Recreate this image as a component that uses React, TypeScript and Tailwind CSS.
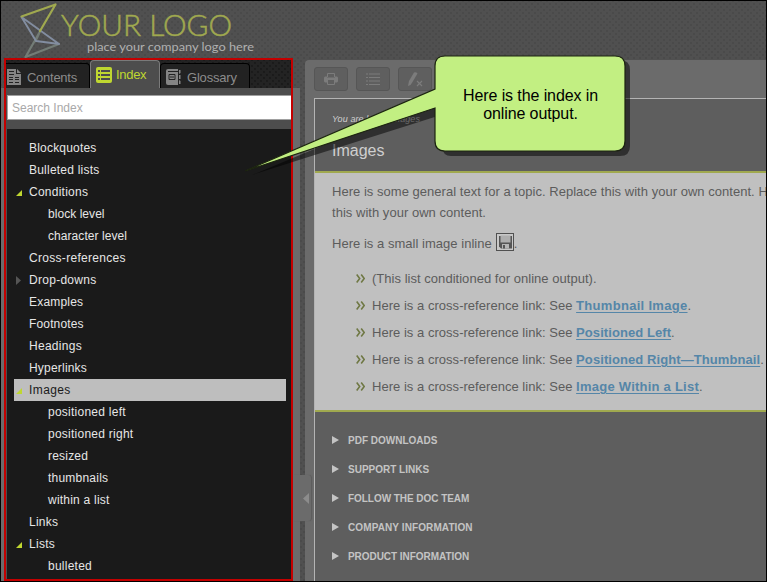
import React from "react";

const sans = "font-['Liberation_Sans',Arial,sans-serif]";

const headerDots =
  "bg-[#505050] bg-[radial-gradient(circle,#464646_0.5px,transparent_1px),radial-gradient(circle,#464646_0.5px,transparent_1px)] bg-[size:6px_6px] bg-[position:0_0,3px_3px]";
const darkDots =
  "bg-[#232323] bg-[radial-gradient(circle,#141414_0.5px,transparent_1px),radial-gradient(circle,#141414_0.5px,transparent_1px)] bg-[size:6px_6px] bg-[position:0_0,3px_3px]";

type Item = { label: string; level?: number; state?: "open" | "closed"; selected?: boolean; ls: string };

const items: Item[] = [
  { label: "Blockquotes", ls: "tracking-[0.2px]" },
  { label: "Bulleted lists", ls: "tracking-[0.22px]" },
  { label: "Conditions", state: "open", ls: "tracking-[0.25px]" },
  { label: "block level", level: 1, ls: "tracking-[0.05px]" },
  { label: "character level", level: 1, ls: "tracking-[0.07px]" },
  { label: "Cross-references", ls: "tracking-[0.3px]" },
  { label: "Drop-downs", state: "closed", ls: "tracking-[0.28px]" },
  { label: "Examples", ls: "tracking-[0.2px]" },
  { label: "Footnotes", ls: "tracking-[0.15px]" },
  { label: "Headings", ls: "tracking-[0.28px]" },
  { label: "Hyperlinks", ls: "tracking-[0.2px]" },
  { label: "Images", state: "open", selected: true, ls: "tracking-[0.4px]" },
  { label: "positioned left", level: 1, ls: "tracking-[0.25px]" },
  { label: "positioned right", level: 1, ls: "tracking-[0.25px]" },
  { label: "resized", level: 1, ls: "tracking-[0.2px]" },
  { label: "thumbnails", level: 1, ls: "tracking-[0.22px]" },
  { label: "within a list", level: 1, ls: "tracking-[0.22px]" },
  { label: "Links", ls: "tracking-[0.25px]" },
  { label: "Lists", state: "open", ls: "tracking-[0.3px]" },
  { label: "bulleted", level: 1, ls: "tracking-[0.25px]" },
];

function Logo() {
  return (
    <svg width="260" height="57" viewBox="0 0 260 57" className="block">
      <g fill="none" strokeLinejoin="round" strokeLinecap="round">
        <path d="M34.500 40 L39 30.500 M39 30.500 L24.500 56 L58 43" stroke="#737c76" strokeWidth="2.200" />
        <path d="M20.500 16 L58 43 L35 40 Z" stroke="#828da0" strokeWidth="1.900" />
        <path d="M20.500 15.500 L54.500 3.500 L39 30" stroke="#a0a94f" strokeWidth="2.200" />
      </g>
      <text
        x="60"
        y="34.500"
        textLength="171"
        lengthAdjust="spacingAndGlyphs"
        fontSize="30"
        fontWeight="300"
        fill="#a0a94f"
        stroke="#a0a94f"
        strokeWidth="0.5"
        fontFamily="Lato, sans-serif"
      >
        YOUR LOGO
      </text>
      <text
        x="86"
        y="50"
        textLength="167"
        lengthAdjust="spacingAndGlyphs"
        fontSize="11"
        fill="#b0b0b0"
        fontFamily="Lato, sans-serif"
      >
        place your company logo here
      </text>
    </svg>
  );
}

function ContentsIcon() {
  return (
    <svg width="14" height="16" viewBox="0 0 14 16" className="block shrink-0">
      <path d="M0 0h9v5h5v11H0z" fill="#858585" />
      <path d="M10 0l4 4h-4z" fill="#858585" />
      <path d="M2 2.500h5M2 5.500h5M2 8.500h4M8 8.500h4M2 10.500h4M8 10.500h4M2 13.500h4M8 13.500h4" stroke="#222" />
    </svg>
  );
}

function IndexIcon() {
  return (
    <svg width="16" height="16" viewBox="0 0 16 16" className="block shrink-0">
      <rect width="16" height="16" rx="2" fill="#bfd730" />
      <path d="M2 4h2M5 4h9M2 8h2M5 8h9M2 12h2M5 12h9" stroke="#4d4d4d" strokeWidth="2" />
    </svg>
  );
}

function GlossaryIcon() {
  return (
    <svg width="16" height="16" viewBox="0 0 16 16" className="block shrink-0">
      <path d="M2 0h10v16H2a2 2 0 0 1-2-2V2a2 2 0 0 1 2-2z" fill="#858585" />
      <path d="M2 2.500h10" stroke="#222" />
      <path d="M3 5.500h6v5H3zM4 8h4" fill="none" stroke="#222" />
      <path d="M13 1h1.500v3l-1.500 1zM13 6h1.500v4H13zM13 11l1.500 1v3H13z" fill="#858585" />
    </svg>
  );
}

function Sidebar() {
  return (
    <aside className="flex h-[523px] w-[289px] shrink-0 flex-col overflow-hidden border-2 border-[#c40000] bg-[#4d4d4d]">
      <div className={"flex h-[28px] shrink-0 items-end " + darkDots}>
        <div className="flex h-[25px] w-[84px] items-center gap-[6px] rounded-tr border-t border-r border-black bg-[#222222] pt-[2px] pl-[1px] text-[13px] text-[#8c8c8c]">
          <ContentsIcon />
          <span className="pt-px tracking-[-0.27px]">Contents</span>
        </div>
        <div className="flex h-[28px] w-[70px] items-center gap-[4px] rounded-t border border-b-0 border-[#7a7a7a] bg-[#4d4d4d] pl-[5px] text-[13px] text-[#bfd730]">
          <IndexIcon />
          <span className="tracking-[-0.3px]">Index</span>
        </div>
        <div className="flex h-[25px] w-[90px] items-center gap-[5px] rounded-t border border-b-0 border-black bg-[#222222] pt-[2px] pl-[5px] text-[13px] text-[#8c8c8c]">
          <GlossaryIcon />
          <span className="pt-px tracking-[-0.2px]">Glossary</span>
        </div>
      </div>
      <div className="flex h-[41px] shrink-0 items-start pt-[7px] pl-px">
        <div className="flex h-[25px] w-full items-center border border-r-0 border-[#a0a0a0] bg-white pl-1 text-[12px] text-[#a9a9a9]">
          Search Index
        </div>
      </div>
      <ul className="ml-px grow bg-[#1a1a1a] pt-[8px] pr-[5px] pl-[7px]">
        {items.map((it) => (
          <li
            key={it.label}
            className={"flex h-[22px] items-center text-[12px] " + (it.selected ? "bg-[#bebebe] text-[#1a1a1a]" : "text-[#e6e6e6]")}
          >
            <span className="flex w-[15px] shrink-0 pl-[2px]">
              {it.state === "open" && (
                <svg width="6" height="6" className="mt-[2px] block">
                  <path d="M6 0v6H0z" fill="#bfd730" />
                </svg>
              )}
              {it.state === "closed" && (
                <svg width="5" height="9" className="block">
                  <path d="M0 0l5 4.500L0 9z" fill="#555" />
                </svg>
              )}
            </span>
            <span className={(it.level ? "pl-[19px] " : "") + "whitespace-nowrap " + it.ls}>{it.label}</span>
          </li>
        ))}
      </ul>
    </aside>
  );
}

function ToolButton({ children }: { children: React.ReactNode }) {
  return (
    <div className="flex h-[24px] w-[34px] shrink-0 items-center justify-center rounded-[3px] border border-[#565656] bg-[#5f5f5f]">
      {children}
    </div>
  );
}

function Toolbar() {
  return (
    <div className="flex h-[38px] shrink-0 gap-[8px] pt-[7px] pl-[9px]">
      <ToolButton>
        <svg width="14" height="12" viewBox="0 0 14 12">
          <path d="M3.500 4V.500h7V4" fill="none" stroke="#7c7c7c" />
          <path d="M1 3.500h2v1h8v-1h2l1 1v4l-1 1h-2V7H3v2.500H1l-1-1v-4z" fill="#7c7c7c" />
          <path d="M3.500 7v4.500h7V7" fill="none" stroke="#7c7c7c" />
        </svg>
      </ToolButton>
      <ToolButton>
        <svg width="14" height="12" viewBox="0 0 14 12">
          <path d="M0 1h2M0 4.500h2M0 8h2M0 11.500h2M3 1h11M3 4.500h11M3 8h11M3 11.500h11" stroke="#7c7c7c" />
        </svg>
      </ToolButton>
      <ToolButton>
        <svg width="16" height="16" viewBox="0 0 16 16">
          <path d="M1 15l1-5 5-8.500q2-1 3.500 1L5.500 11l-2 3z" fill="#7c7c7c" />
          <path d="M10 10l5 5M15 10l-5 5" stroke="#7c7c7c" strokeWidth="1.200" />
        </svg>
      </ToolButton>
    </div>
  );
}

const links = [
  { label: "Thumbnail Image", ls: "tracking-[0.3px]" },
  { label: "Positioned Left", ls: "tracking-[0.07px]" },
  { label: "Positioned Right—Thumbnail", ls: "tracking-[0.08px]" },
  { label: "Image Within a List", ls: "tracking-[0.24px]" },
];

function Bullet() {
  return (
    <svg width="9" height="9" viewBox="0 0 9 9" className="mr-[7px] block shrink-0">
      <path d="M0.700 0.500l3 4-3 4M5.200 0.500l3 4-3 4" fill="none" stroke="#6f7844" strokeWidth="1.600" />
    </svg>
  );
}

function Disk() {
  return (
    <svg width="18" height="18" viewBox="0 0 18 18" className="mb-[4px] ml-[4px] block shrink-0">
      <rect x="0.500" y="0.500" width="17" height="17" fill="#c8c8c8" stroke="#505050" />
      <path d="M3 3h13v12.500H5l-2-2z" fill="#555" />
      <rect x="4.500" y="2.500" width="10" height="7" fill="#aeaeae" />
      <rect x="6" y="11" width="7" height="4.500" fill="#b5b5b5" />
      <rect x="7" y="12" width="2" height="3.500" fill="#555" />
    </svg>
  );
}

const drops = [
  { label: "PDF DOWNLOADS", ls: "" },
  { label: "SUPPORT LINKS", ls: "" },
  { label: "FOLLOW THE DOC TEAM", ls: "tracking-[-0.05px]" },
  { label: "COMPANY INFORMATION", ls: "tracking-[0.1px]" },
  { label: "PRODUCT INFORMATION", ls: "tracking-[-0.05px]" },
];

function Topic() {
  return (
    <div className="ml-[9px] flex grow flex-col overflow-hidden border-t border-l border-[#b4b4b4] bg-[#5e5e5e] whitespace-nowrap">
      <div className="h-[72px] shrink-0 pl-[17px]">
        <div className="pt-[14px] text-[9px] leading-[12px] tracking-[0.1px] text-[#d0d0d0] italic">You are here: Images</div>
        <h1 className="mt-[16px] text-[16px] leading-[20px] text-[#cfcfcf]">Images</h1>
      </div>
      <div className="h-[241px] shrink-0 border-y-2 border-[#a0a94f] bg-[#c0c0c0] pl-[17px] text-[13px] tracking-[0.03px] text-[#5c5c5c]">
        <p className="pt-[8px] leading-[21px]">
          Here is some general text for a topic. Replace this with your own content. Here
          <br />
          this with your own content.
        </p>
        <p className="mt-[8px] flex h-[26px] items-center">
          Here is a small image inline
          <Disk />
          <span>.</span>
        </p>
        <ul className="mt-[8px] pl-[24px]">
          <li className="flex h-[27px] items-center">
            <Bullet />
            (This list conditioned for online output).
          </li>
          {links.map((l) => (
            <li key={l.label} className="flex h-[27px] items-center">
              <Bullet />
              <span>Here is a cross-reference link: See&nbsp;</span>
              <a className={"font-bold text-[#5586a8] underline underline-offset-2 " + l.ls}>{l.label}</a>
              <span>.</span>
            </li>
          ))}
        </ul>
      </div>
      <ul className="pt-[14px] pl-[17px]">
        {drops.map((d) => (
          <li key={d.label} className="flex h-[29px] items-center text-[10px] font-bold text-[#c4c4c4]">
            <svg width="7" height="8" className="mr-[9px] mb-[2px] block">
              <path d="M0 0l7 4-7 4z" fill="#c4c4c4" />
            </svg>
            <span className={d.ls}>{d.label}</span>
          </li>
        ))}
      </ul>
    </div>
  );
}

function Callout() {
  return (
    <div className="absolute top-0 left-0 h-[582px] w-[767px]">
      <svg width="767" height="582" className="absolute top-0 left-0">
        <path d="M252 175L441 96V66q0-6 8-6h171q10 0 10 10v76q0 10-10 10H451q-8 0-10-10V115z" fill="#000" fillOpacity="0.5" />
        <path
          d="M245 171L435 89V66q0-10 10-10h170q10 0 10 10v75q0 10-10 10H445q-10 0-10-10V108z"
          fill="#c2ef82"
          stroke="#1c2410"
          strokeWidth="1.200"
        />
      </svg>
      <p className="absolute top-[87px] left-[435px] w-[191px] text-center text-[16px] leading-[18px] tracking-[-0.1px] text-black">
        Here is the index in
        <br />
        online output.
      </p>
    </div>
  );
}

export default function App() {
  return (
    <div className={"relative flex h-[582px] w-[767px] flex-col overflow-hidden border border-black " + headerDots + " " + sans}>
      <header className="h-[57px] shrink-0">
        <Logo />
      </header>
      <div className="flex grow">
        <div className="mt-[30px] w-[3px] shrink-0 bg-[#6b6b6b]" />
        <Sidebar />
        <div className="mt-[30px] w-[7px] shrink-0 bg-[#6b6b6b]" />
        <div className="w-[5px] shrink-0" />
        <main className="mt-[2px] flex h-[521px] min-w-0 grow flex-col overflow-hidden rounded-tl bg-[#6b6b6b]">
          <Toolbar />
          <Topic />
        </main>
      </div>
      <div className="absolute top-[474px] left-[292px] flex h-[46px] w-[18px] items-center justify-end rounded-r-[3px] bg-[#6b6b6b] pr-[2px] shadow-[1px_0_1px_#5c5c5c]">
        <svg width="6" height="11">
          <path d="M6 0v11L0 5.500z" fill="#8c8c8c" />
        </svg>
      </div>
      <div className="absolute -top-px -left-px">
        <Callout />
      </div>
    </div>
  );
}
